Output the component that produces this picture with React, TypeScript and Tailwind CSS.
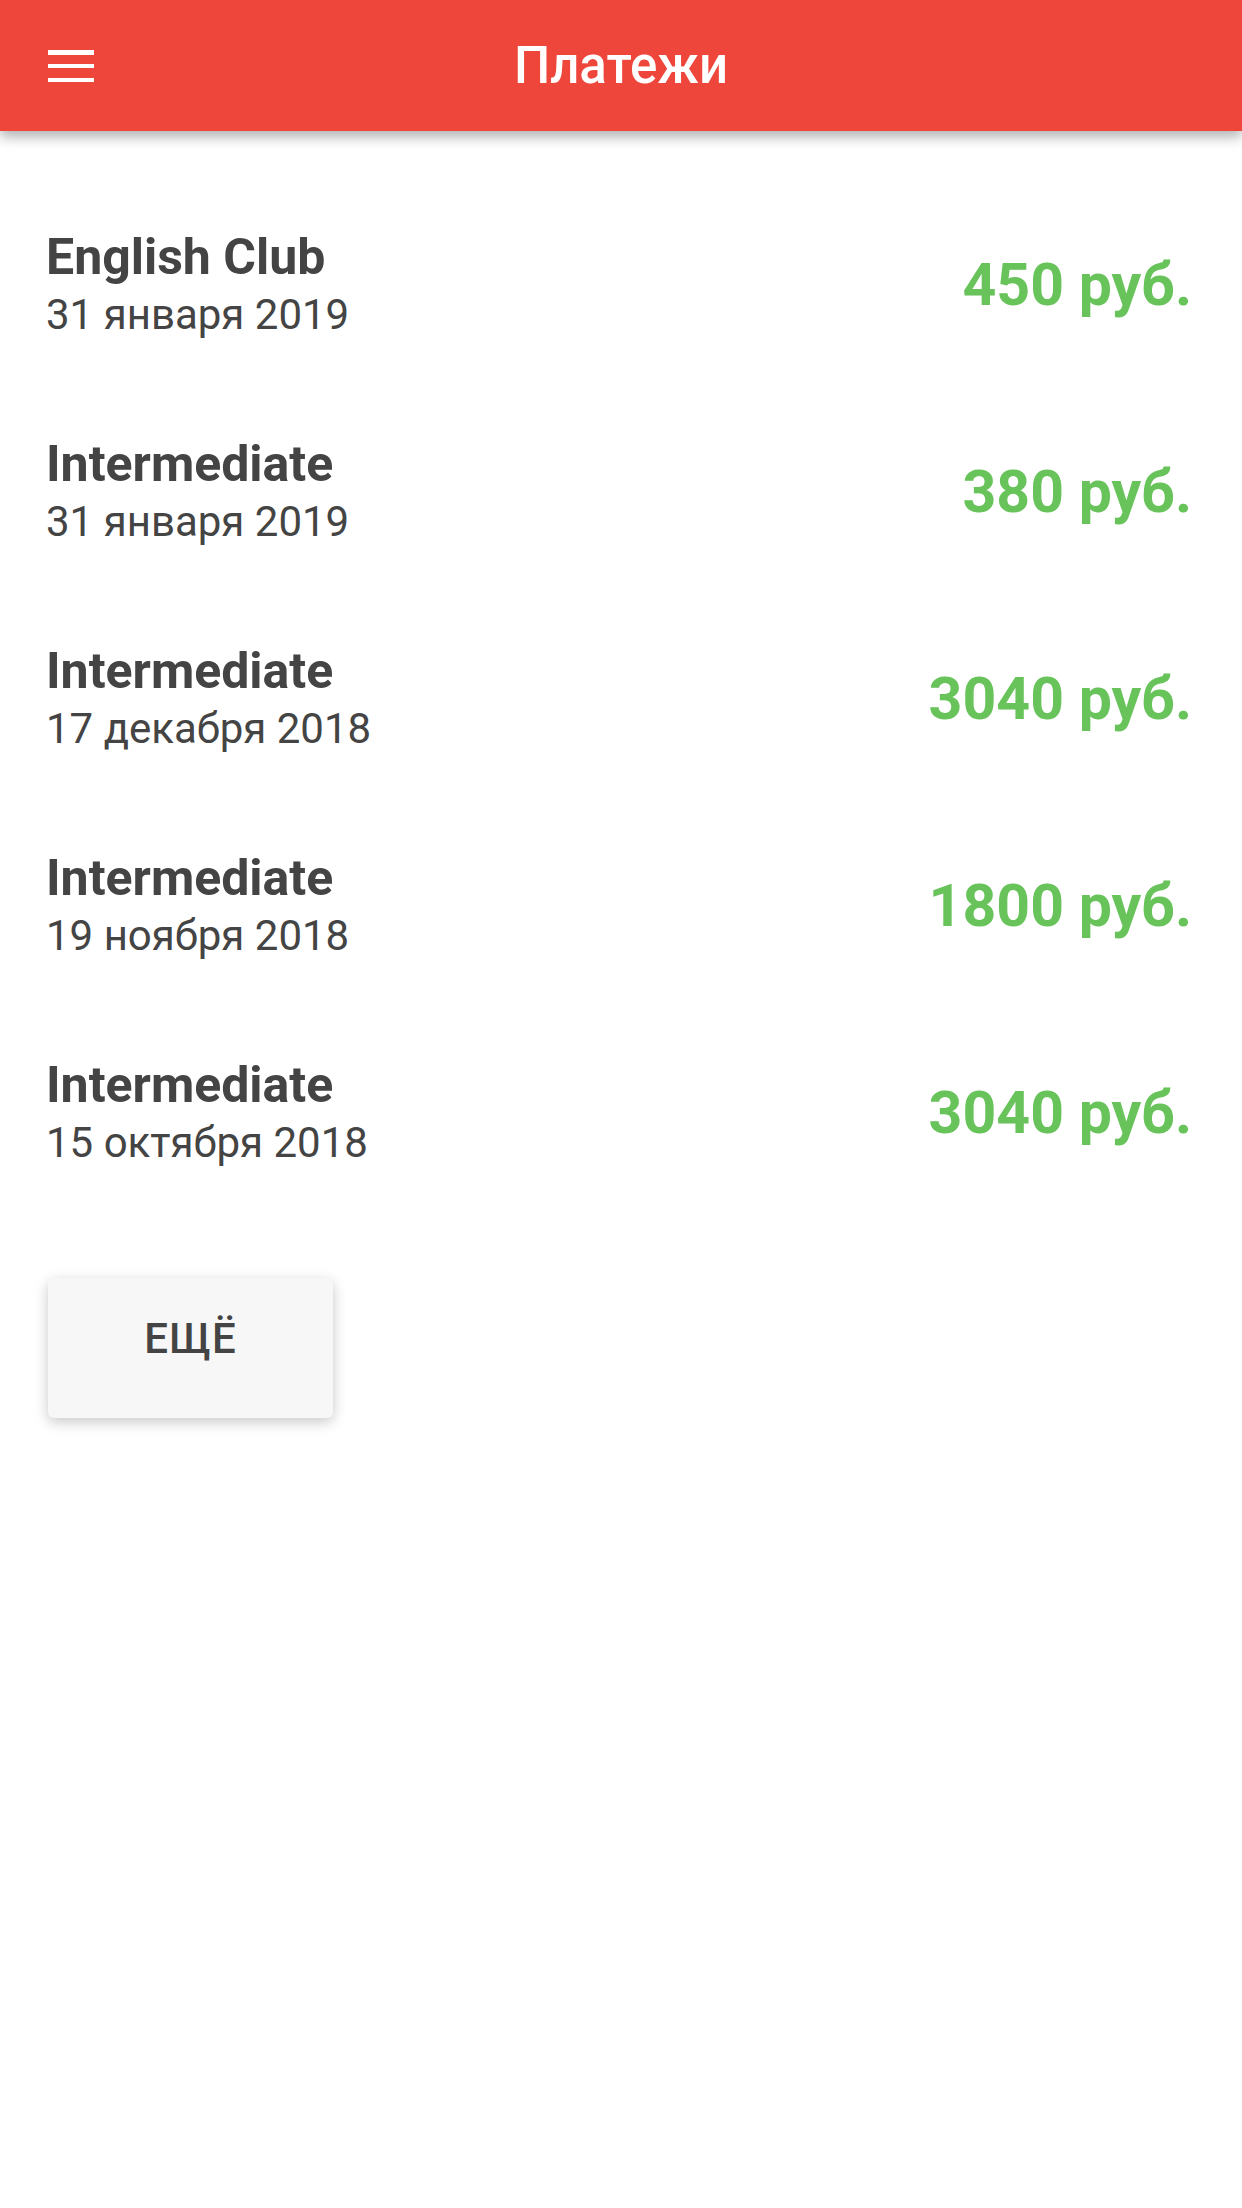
import React from "react";

const rows = [
  { title: "English Club", date: "31 января 2019", amount: "450 руб." },
  { title: "Intermediate", date: "31 января 2019", amount: "380 руб." },
  { title: "Intermediate", date: "17 декабря 2018", amount: "3040 руб." },
  { title: "Intermediate", date: "19 ноября 2018", amount: "1800 руб." },
  { title: "Intermediate", date: "15 октября 2018", amount: "3040 руб." },
];

export default function App() {
  return (
    <div
      className="w-[1242px] min-h-[2208px] bg-white"
      style={{ fontFamily: "Roboto, 'Noto Sans', sans-serif" }}
    >
      <header className="relative z-10 h-[131px] bg-[#ef463c] flex items-center shadow-[0_6px_12px_rgba(0,0,0,0.3)]">
        <div className="absolute left-[48px] top-[50px] w-[46px] h-[32px] flex flex-col justify-between">
          <div className="h-[4.5px] bg-white" />
          <div className="h-[4.5px] bg-white" />
          <div className="h-[4.5px] bg-white" />
        </div>
        <h1 className="w-full text-center text-white font-medium text-[51px] leading-none">
          Платежи
        </h1>
      </header>

      <main className="pt-[49px]">
        {rows.map((r, i) => (
          <div
            key={i}
            className="h-[207px] flex items-center justify-between pl-[46px] pr-[50px]"
          >
            <div className="flex flex-col">
              <div className="text-[#444444] font-bold text-[50px] leading-[56px]">
                {r.title}
              </div>
              <div className="text-[#444444] text-[42px] leading-[48px] mt-[6px]">
                {r.date}
              </div>
            </div>
            <div className="text-[#67c35a] font-bold text-[59px] leading-none mt-[2px]">
              {r.amount}
            </div>
          </div>
        ))}

        <div className="pl-[48px] mt-[63px]">
          <button className="w-[285px] h-[140px] bg-[#f7f7f7] rounded-[6px] shadow-[0_4px_14px_rgba(0,0,0,0.22)] flex items-start justify-center pt-[36px]">
            <span className="text-[#444444] font-medium text-[42px] leading-[50px] tracking-[1px]">
              ЕЩЁ
            </span>
          </button>
        </div>
      </main>
    </div>
  );
}
